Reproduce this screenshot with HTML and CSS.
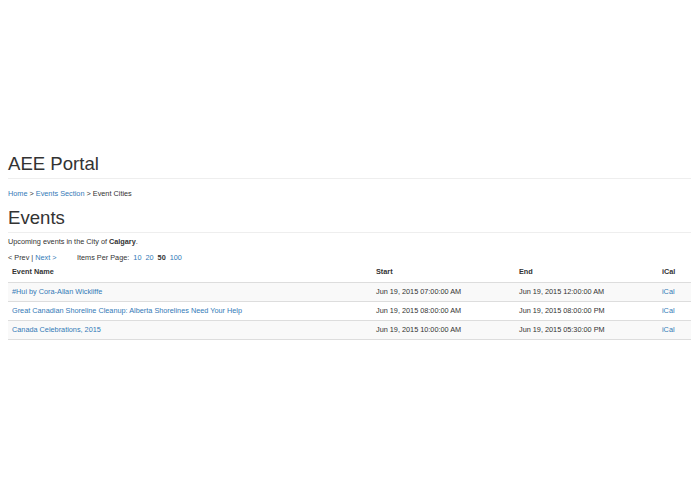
FILE: index.html
```html
<!DOCTYPE html>
<html>
<head>
<meta charset="utf-8">
<title>AEE Portal</title>
<link rel="stylesheet" href="styles.css">
</head>
<body>
<div class="container">
  <div class="page-header">
    <h1>AEE Portal</h1>
  </div>
  <p class="crumbs"><a href="#">Home</a> &gt; <a href="#">Events Section</a> &gt; Event Cities</p>
  <div class="page-header events-header">
    <h1>Events</h1>
  </div>
  <p class="intro">Upcoming events in the City of <b>Calgary</b>.</p>
  <div class="pager">
    <span class="nav">&lt; Prev | <a href="#">Next &gt;</a></span>
    <span class="per-page"><span>Items Per Page:</span> <a href="#">10</a> <a href="#">20</a> <b>50</b> <a href="#">100</a></span>
  </div>
  <table class="events">
    <thead>
      <tr>
        <th class="c-name">Event Name</th>
        <th class="c-start">Start</th>
        <th class="c-end">End</th>
        <th class="c-ical">iCal</th>
      </tr>
    </thead>
    <tbody>
      <tr class="odd">
        <td><a href="#">#Hui by Cora-Allan Wickliffe</a></td>
        <td>Jun 19, 2015 07:00:00 AM</td>
        <td>Jun 19, 2015 12:00:00 AM</td>
        <td><a href="#">iCal</a></td>
      </tr>
      <tr>
        <td><a href="#">Great Canadian Shoreline Cleanup: Alberta Shorelines Need Your Help</a></td>
        <td>Jun 19, 2015 08:00:00 AM</td>
        <td>Jun 19, 2015 08:00:00 PM</td>
        <td><a href="#">iCal</a></td>
      </tr>
      <tr class="odd">
        <td><a href="#">Canada Celebrations, 2015</a></td>
        <td>Jun 19, 2015 10:00:00 AM</td>
        <td>Jun 19, 2015 05:30:00 PM</td>
        <td><a href="#">iCal</a></td>
      </tr>
    </tbody>
  </table>
</div>
</body>
</html>
```

FILE: styles.css
```css
html, body {
  margin: 0;
  padding: 0;
  background: #fff;
}
body {
  font-family: "Liberation Sans", Arial, sans-serif;
  font-size: 7.3px;
  line-height: 10px;
  color: #333;
}
a {
  color: #337ab7;
  text-decoration: none;
}
.container {
  padding: 154px 4px 0 8px;
}
.page-header {
  padding-bottom: 4px;
  border-bottom: 1px solid #eee;
}
.page-header h1 {
  margin: 0;
  font-size: 18.6px;
  line-height: 20px;
  font-weight: 500;
}
.crumbs {
  margin: 10px 0 0;
}
.events-header {
  margin-top: 9px;
}
.intro {
  margin: 4px 0 0;
}
.pager {
  margin-top: 6px;
  display: flex;
}
.pager .nav {
  width: 69px;
}
.per-page {
  display: flex;
  gap: 4px;
}
.pager b {
  font-weight: bold;
}
table.events {
  width: 100%;
  border-collapse: collapse;
  border-spacing: 0;
}
table.events th,
table.events td {
  text-align: left;
  padding: 4px;
  line-height: 10px;
  vertical-align: top;
}
table.events th {
  font-weight: bold;
  padding-bottom: 5px;
  border-bottom: 1px solid #ddd;
}
table.events td {
  border-bottom: 1px solid #ddd;
}
table.events tr.odd td {
  background: #f9f9f9;
}
.c-name { width: 356px; }
.c-start { width: 135px; }
.c-end { width: 135px; }
.c-ical { width: 25px; }
```
